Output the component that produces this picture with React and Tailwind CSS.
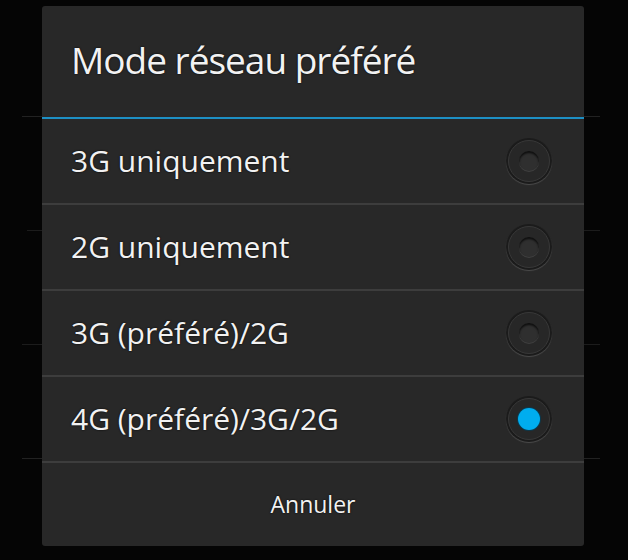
const options = [
  { label: "3G uniquement", checked: false },
  { label: "2G uniquement", checked: false },
  { label: "3G (préféré)/2G", checked: false },
  { label: "4G (préféré)/3G/2G", checked: true },
];

const Radio = ({ checked }) => (
  <div className="w-[46px] h-[46px] rounded-full bg-[#1b1b1b] p-[2px] shadow-[0_1px_1px_rgba(100,100,100,0.6)]">
    <div className="w-full h-full rounded-full bg-[#272727] border border-[#383838] flex items-center justify-center">
      {checked ? (
        <div className="w-[22px] h-[22px] rounded-full bg-[#00adef] shadow-[0_0_0_1px_#0a3a4f]" />
      ) : (
        <div className="w-[20px] h-[20px] rounded-full bg-[#2f2f2f] shadow-[inset_0_2px_2px_rgba(0,0,0,0.7),0_1px_0_rgba(90,90,90,0.5)]" />
      )}
    </div>
  </div>
);

export default function App() {
  return (
    <div
      className="relative w-[628px] h-[560px] bg-[#050505] overflow-hidden"
      style={{ fontFamily: '"Open Sans", "DejaVu Sans", sans-serif' }}
    >
      {/* list behind the dialog */}
      <div className="flex flex-col pl-[22px] pr-[28px] pt-[116px]">
        <div className="h-[114px] border-t border-[#222]" />
        <div className="h-[114px] border-t border-[#1c1c1c] ml-[5px]" />
        <div className="h-[114px] border-t border-[#1c1c1c]" />
        <div className="h-[114px] border-t border-[#222]" />
      </div>

      <div className="absolute left-[42px] top-[6px] w-[542px] h-[540px] bg-[#282828] rounded-[3px] flex flex-col text-[#f2f2f2] [text-shadow:0_0_2px_#000]">
        <div className="h-[111px] flex items-center px-[29px] pb-[4px]">
          <span className="text-[37px] leading-none tracking-[-1px]">Mode réseau préféré</span>
        </div>
        <div className="h-[2px] bg-[#1d8fc4]" />
        {options.map((o) => (
          <div key={o.label} className="flex flex-col">
            <div className="h-[84px] flex items-center justify-between pl-[29px] pr-[32px]">
              <span className="text-[30px] leading-none">{o.label}</span>
              <Radio checked={o.checked} />
            </div>
            <div className="h-[2px] bg-[#3d3d3d]" />
          </div>
        ))}
        <div className="flex-1 flex items-center justify-center">
          <span className="text-[23px] leading-none">Annuler</span>
        </div>
      </div>
    </div>
  );
}
